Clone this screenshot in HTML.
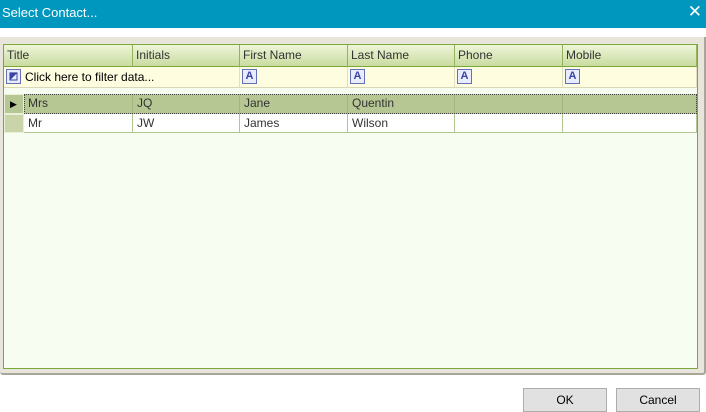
<!DOCTYPE html>
<html><head><style>
*{box-sizing:border-box;margin:0;padding:0}
body{width:706px;height:412px;background:#fff;font-family:"Liberation Sans",sans-serif;font-size:12px;color:#000;position:relative;overflow:hidden}
.tb{position:absolute;left:0;top:0;width:706px;height:28px;background:#0097bf;color:#fff;font-size:13px;line-height:26px;padding-left:2px}
.x{position:absolute;right:4px;top:0;font-size:17px;line-height:24px;color:#fff}
.frame{position:absolute;left:0;top:37px;width:706px;height:338px;background:#e8e6da;border-right:2px solid #a8a69a;border-bottom:2px solid #a8a69a;border-radius:0 0 3px 3px}
.grid{position:absolute;left:3px;top:44px;width:695px;height:325px;background:#f7fdf0;border:1px solid #7aa83a}
.a{position:absolute}
.hd{top:0;height:22px;background:linear-gradient(#eef5d8,#c9dca0);border-right:1px solid #93b45c;border-bottom:1px solid #7aa83a;line-height:21px;padding-left:3px;color:#333}
.fr{top:22px;height:21px;background:#fefde0;border-right:1px solid #e0e0c0;border-bottom:1px solid #d8d8b8}
.ic{position:absolute;left:2px;top:2px;width:15px;height:15px;border:1px solid #6670b8;background:#e8ecff;color:#3a44a0;font-size:11px;line-height:13px;text-align:center;font-weight:bold}
.r{height:19px;line-height:18px;padding-left:4px;border-right:1px solid #b0c890;border-bottom:1px solid #b0c890}
.sel{background:#b6c794;color:#333;border-right-color:#a4b680}
.wh{background:#fff;color:#333}
.btn{position:absolute;top:388px;width:84px;height:24px;background:#e1e1e1;border:1px solid #adadad;text-align:center;line-height:22px;font-size:12px}
</style></head><body>
<div class="tb">Select Contact...<span class="x">✕</span></div>
<div class="frame"></div>
<div class="grid">
 <div class="a hd" style="left:0;width:129px">Title</div>
 <div class="a hd" style="left:129px;width:107px">Initials</div>
 <div class="a hd" style="left:236px;width:108px">First Name</div>
 <div class="a hd" style="left:344px;width:107px">Last Name</div>
 <div class="a hd" style="left:451px;width:108px">Phone</div>
 <div class="a hd" style="left:559px;width:134px">Mobile</div>
 <div class="a fr" style="left:0;width:236px"><div class="ic" style="font-size:10px">◩</div><span style="position:absolute;left:21px;top:3px">Click here to filter data...</span></div>
 <div class="a fr" style="left:236px;width:108px"><div class="ic">A</div></div>
 <div class="a fr" style="left:344px;width:107px"><div class="ic">A</div></div>
 <div class="a fr" style="left:451px;width:108px"><div class="ic">A</div></div>
 <div class="a fr" style="left:559px;width:134px"><div class="ic">A</div></div>
 <div class="a" style="left:0;top:49px;width:20px;height:20px;background:#b6c794;border:1px solid #e8f0d8;font-size:9px;line-height:18px;padding-left:5px">▶</div>
 <div class="a" style="left:0;top:69px;width:20px;height:19px;background:#c9d4a8;border:1px solid #e8f0d8"></div>
 <div class="a" style="left:20px;top:49px;width:673px;height:20px;border:1px dotted #444;z-index:2"></div>
 <div class="a r sel" style="left:20px;top:49px;width:109px;height:20px">Mrs</div>
 <div class="a r sel" style="left:129px;top:49px;width:107px;height:20px">JQ</div>
 <div class="a r sel" style="left:236px;top:49px;width:108px;height:20px">Jane</div>
 <div class="a r sel" style="left:344px;top:49px;width:107px;height:20px">Quentin</div>
 <div class="a r sel" style="left:451px;top:49px;width:108px;height:20px"></div>
 <div class="a r sel" style="left:559px;top:49px;width:134px;height:20px"></div>
 <div class="a r wh" style="left:20px;top:69px;width:109px">Mr</div>
 <div class="a r wh" style="left:129px;top:69px;width:107px">JW</div>
 <div class="a r wh" style="left:236px;top:69px;width:108px">James</div>
 <div class="a r wh" style="left:344px;top:69px;width:107px">Wilson</div>
 <div class="a r wh" style="left:451px;top:69px;width:108px"></div>
 <div class="a r wh" style="left:559px;top:69px;width:134px"></div>
</div>
<div class="btn" style="left:523px">OK</div>
<div class="btn" style="left:616px">Cancel</div>
</body></html>
